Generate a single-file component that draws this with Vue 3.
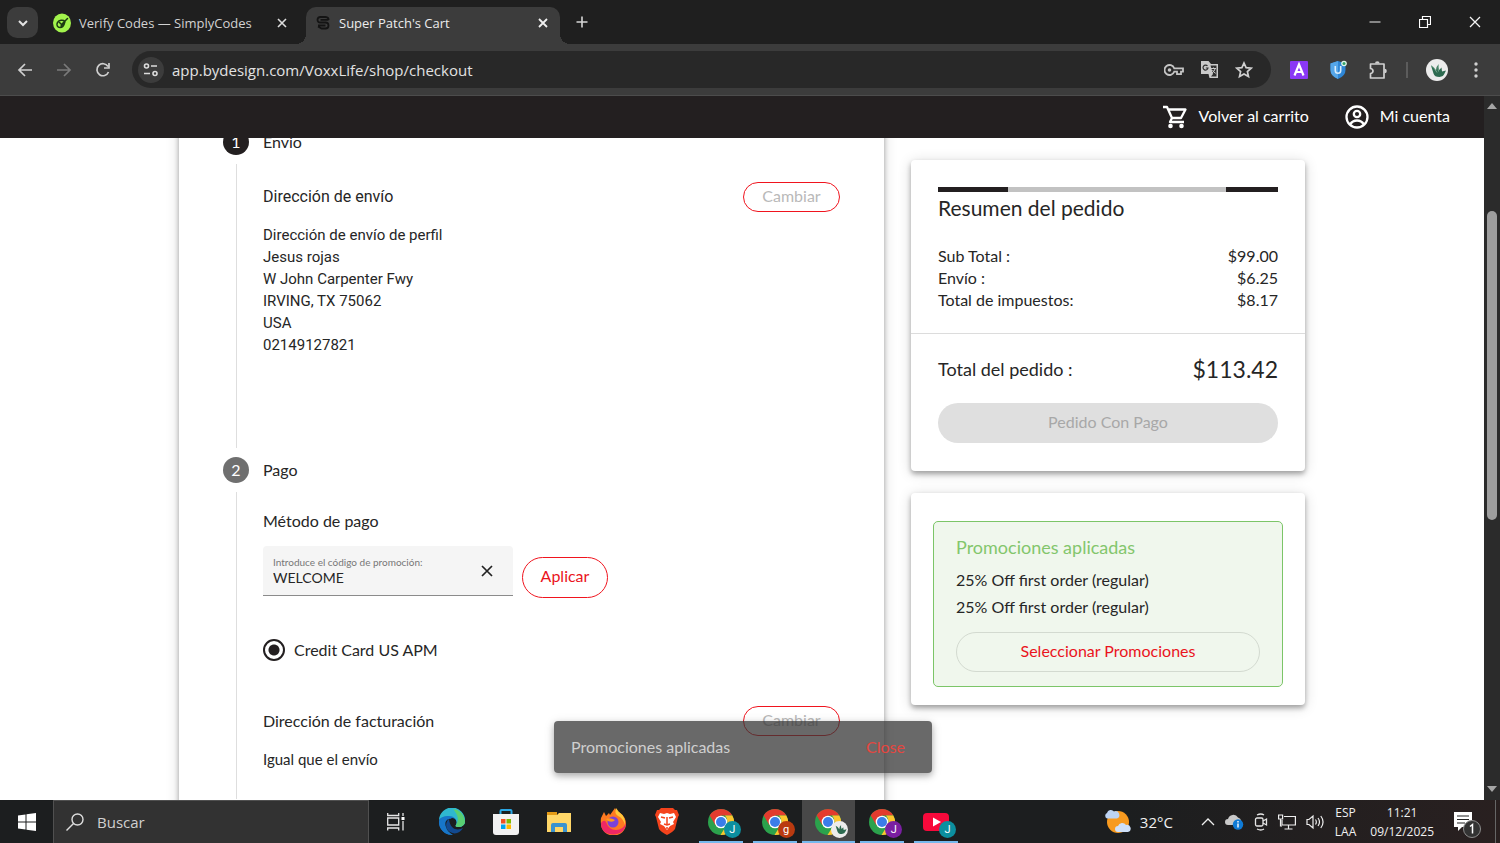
<script setup>
import { ref } from 'vue'

const url = ref('app.bydesign.com/VoxxLife/shop/checkout')
const promoCode = ref('WELCOME')
const payment = ref('card')
const search = ref('')

const address = [
  'Dirección de envío de perfil',
  'Jesus rojas',
  'W John Carpenter Fwy',
  'IRVING, TX 75062',
  'USA',
  '02149127821',
]
const charges = [
  { label: 'Sub Total :', value: '$99.00' },
  { label: 'Envío :', value: '$6.25' },
  { label: 'Total de impuestos:', value: '$8.17' },
]
const promotions = ['25% Off first order (regular)', '25% Off first order (regular)']
const chromeApps = [
  { name: 'Chrome J', letter: 'J', tone: 'teal' },
  { name: 'Chrome g', letter: 'g', tone: 'rust' },
  { name: 'Chrome cart', letter: '', tone: 'plant', active: true },
  { name: 'Chrome J 2', letter: 'J', tone: 'purple' },
]
</script>

<template>
  <div class="desktop">
    <header class="tabstrip">
      <button class="tab-menu" aria-label="Buscar pestañas">
        <svg width="12" height="12" viewBox="0 0 12 12"><path d="M2 4l4 4 4-4" fill="none" stroke="#e3e3e3" stroke-width="2" /></svg>
      </button>
      <div class="tab">
        <svg class="fav" width="18" height="20" viewBox="0 0 18 20">
          <ellipse cx="9" cy="10" rx="9" ry="9.5" fill="#a2f34c" />
          <path d="M12 8.500c-2-2-6-1.500-7.500 1s0 5 2.500 5 4-2 4.500-4.500M6.500 9.500l2 2L14.500 5.500M8 13l4-4" fill="none" stroke="#1c3a12" stroke-width="1.500" stroke-linecap="round" />
        </svg>
        <span class="tab-title">Verify Codes — SimplyCodes</span>
        <button class="tab-close" aria-label="Cerrar pestaña">
          <svg width="10" height="10" viewBox="0 0 10 10"><path d="M1 1l8 8M9 1L1 9" stroke="#dedede" stroke-width="1.600" /></svg>
        </button>
      </div>
      <div class="tab active">
        <svg class="fav" width="16" height="16" viewBox="0 0 16 16">
          <path d="M13.500 5V4Q13 2 10 2H5.500Q2.500 2 2.500 4.800T5.500 7.500H10.500Q13.500 7.500 13.500 10.500T10.500 13.500H6.500L3 11.500M5.500 4.800H13.500M3 10.500H10.500" fill="none" stroke="#141414" stroke-width="1.800" stroke-linejoin="round" />
        </svg>
        <span class="tab-title">Super Patch's Cart</span>
        <button class="tab-close" aria-label="Cerrar pestaña">
          <svg width="10" height="10" viewBox="0 0 10 10"><path d="M1 1l8 8M9 1L1 9" stroke="#f0f0f0" stroke-width="1.800" /></svg>
        </button>
      </div>
      <button class="new-tab" aria-label="Nueva pestaña">
        <svg width="12" height="12" viewBox="0 0 12 12"><path d="M6 0.500v11M0.500 6h11" stroke="#d6d6d6" stroke-width="1.600" /></svg>
      </button>
      <div class="window-controls">
        <button aria-label="Minimizar"><svg width="12" height="12" viewBox="0 0 12 12"><path d="M0.500 6h11" stroke="#eee" /></svg></button>
        <button aria-label="Restaurar"><svg width="12" height="12" viewBox="0 0 12 12"><path d="M0.500 3.500h8v8h-8zM3.500 3.500v-3h8v8h-3" fill="none" stroke="#fff" stroke-width="1.200" /></svg></button>
        <button aria-label="Cerrar"><svg width="12" height="12" viewBox="0 0 12 12"><path d="M1 1l10 10M11 1L1 11" stroke="#f4f4f4" stroke-width="1.300" /></svg></button>
      </div>
    </header>

    <div class="toolbar">
      <div class="nav-buttons">
        <button aria-label="Atrás"><svg width="16" height="16" viewBox="0 0 16 16"><path d="M15 8H2M8 2L2 8l6 6" fill="none" stroke="#d0d0d0" stroke-width="1.700" /></svg></button>
        <button aria-label="Adelante"><svg width="16" height="16" viewBox="0 0 16 16"><path d="M1 8h13M8 2l6 6-6 6" fill="none" stroke="#7a7a7a" stroke-width="1.700" /></svg></button>
        <button aria-label="Recargar"><svg width="16" height="16" viewBox="0 0 16 16"><path d="M13.500 10A6 6 0 1 1 13 4.500M14 1v5H9" fill="none" stroke="#d0d0d0" stroke-width="1.700" /></svg></button>
      </div>
      <div class="omnibox">
        <button class="site-info" aria-label="Información del sitio">
          <svg width="16" height="16" viewBox="0 0 16 16" fill="none" stroke="#dcdcdc" stroke-width="1.600"><circle cx="3.500" cy="4" r="2" /><path d="M8 4h6M1 11.500h6" /><circle cx="12" cy="11.500" r="2" /></svg>
        </button>
        <input v-model="url" class="url" aria-label="Dirección" spellcheck="false" />
        <button aria-label="Contraseñas">
          <svg width="20" height="12" viewBox="0 0 20 12" fill="none" stroke="#c4c4c4" stroke-width="1.800"><path d="M10.200 4.300A5 5 0 1 0 10.200 7.700H13v2.500h4V7.700h2V4.300z" /><circle cx="5.500" cy="6" r="1.800" fill="#c4c4c4" stroke="none" /></svg>
        </button>
        <button aria-label="Traducir">
          <svg width="19" height="19" viewBox="0 0 19 19"><path d="M1 1h7.500l2.500 3h7v14H9.500L8.500 14H1z" fill="#c9c9c9" /><path d="M10.500 5.500h6v11h-5.500l2-2.500z" fill="#303030" /><path d="M7.500 6A2.500 2.500 0 1 0 8 8H5.800" fill="none" stroke="#303030" stroke-width="1.200" /><path d="M11 8.500h5M13.500 7.500v1M15.200 8.500q-.7 3-3.200 4.500M12.500 10q1 2.200 3.200 3.300" fill="none" stroke="#c9c9c9" stroke-width="1" /></svg>
        </button>
        <button aria-label="Favorito">
          <svg width="18" height="18" viewBox="0 0 18 18"><path d="M9 2l2.100 4.700 5.100.5-3.800 3.400 1.100 5L9 13l-4.500 2.600 1.100-5L1.800 7.200l5.100-.5z" fill="none" stroke="#cfcfcf" stroke-width="1.700" /></svg>
        </button>
      </div>
      <div class="extensions">
        <button aria-label="Extensión A"><svg width="18" height="18" viewBox="0 0 18 18"><rect width="18" height="18" rx="1" fill="#8a38f5" /><path d="M4.500 14.500L9 3.500l4.500 11M6 11h6" fill="none" stroke="#fff" stroke-width="2.200" /></svg></button>
        <button aria-label="Extensión U"><svg width="18" height="20" viewBox="0 0 18 20"><path d="M9 1l7.500 2.500V10q0 6-7.500 9Q1.500 16 1.500 10V3.500z" fill="#2e86d6" /><path d="M9 1L1.500 3.500V10q0 6 7.500 9z" fill="#55a6e8" /><path d="M6.300 6v4.500a2.700 2.700 0 0 0 5.400 0V6" fill="none" stroke="#d8ecfb" stroke-width="1.600" /><circle cx="15" cy="3.500" r="2.800" fill="#dff5ea" /><circle cx="15" cy="3.500" r="1.500" fill="#35a36b" /></svg></button>
        <button aria-label="Extensiones"><svg width="20" height="20" viewBox="0 0 20 20"><path d="M2.500 4H16v14H2.500v-4.500a2.500 2.500 0 0 0 0-5z" fill="none" stroke="#d0d0d0" stroke-width="1.700" stroke-linejoin="round" /><path d="M7 3.500a2.300 2.300 0 0 1 4.600 0zM16.500 8.700a2.300 2.300 0 0 1 0 4.600z" fill="#d0d0d0" /></svg></button>
        <span class="divider"></span>
        <button aria-label="Perfil"><svg width="22" height="22" viewBox="0 0 22 22"><circle cx="11" cy="11" r="11" fill="#ececec" /><path d="M5 6.500q3 1 5 5 0-4 2.500-6-.5 3 .7 5.500l2.300-2.500.5 4 4-1-1.500 3q-1 3-5 3.500-5 0-6-3.500z" fill="#2d6a50" /><path d="M5 6.500q3.500 2 6 7M12.500 5.500q-1 3 0 7" fill="none" stroke="#85b59b" stroke-width=".8" /></svg></button>
        <button class="menu" aria-label="Menú"><svg width="4" height="16" viewBox="0 0 4 16" fill="#d0d0d0"><circle cx="2" cy="2" r="1.700" /><circle cx="2" cy="8" r="1.700" /><circle cx="2" cy="14" r="1.700" /></svg></button>
      </div>
    </div>

    <div class="viewport">
      <div class="site">
        <nav class="site-header">
          <a href="#carrito">
            <svg width="26" height="24" viewBox="0 0 26 24"><path d="M1 2h4l5 11h9l4.500-8.500H7M10 13l-2 4h14" fill="none" stroke="#fff" stroke-width="2.300" stroke-linejoin="round" /><circle cx="8.500" cy="21" r="2.300" fill="#fff" /><circle cx="19.500" cy="21" r="2.300" fill="#fff" /></svg>
            <span>Volver al carrito</span>
          </a>
          <a href="#cuenta">
            <svg width="24" height="24" viewBox="0 0 24 24" fill="none" stroke="#fff" stroke-width="2.300"><circle cx="12" cy="12" r="10.500" /><circle cx="12" cy="9" r="3.200" /><path d="M5 19.500q2.500-4 7-4t7 4" /></svg>
            <span>Mi cuenta</span>
          </a>
        </nav>

        <main class="page">
          <section class="steps card">
            <div class="step-head"><span class="num dark">1</span><span class="step-name">Envío</span></div>
            <div class="step-body shipping">
              <div class="title-row">
                <h2 class="roboto">Dirección de envío</h2>
                <button class="change" disabled>Cambiar</button>
              </div>
              <address><span v-for="line in address" :key="line">{{ line }}</span></address>
            </div>
            <div class="step-head"><span class="num">2</span><span class="step-name">Pago</span></div>
            <div class="step-body">
              <h2>Método de pago</h2>
              <div class="promo-row">
                <div class="field">
                  <div class="field-text">
                    <label for="promo">Introduce el código de promoción:</label>
                    <input id="promo" v-model="promoCode" />
                  </div>
                  <button class="clear" aria-label="Borrar"><svg width="12" height="12" viewBox="0 0 12 12"><path d="M1 1l10 10M11 1L1 11" stroke="#222" stroke-width="1.700" /></svg></button>
                </div>
                <button class="apply">Aplicar</button>
              </div>
              <label class="radio"><input v-model="payment" type="radio" name="pay" value="card" />Credit Card US APM</label>
              <div class="title-row">
                <h2>Dirección de facturación</h2>
                <button class="change" disabled>Cambiar</button>
              </div>
              <p class="same">Igual que el envío</p>
            </div>
          </section>

          <aside class="side">
            <section class="summary card">
              <div class="progress"><i class="a"></i><i class="b"></i></div>
              <h2>Resumen del pedido</h2>
              <dl>
                <div v-for="c in charges" :key="c.label"><dt>{{ c.label }}</dt><dd>{{ c.value }}</dd></div>
              </dl>
              <div class="total">
                <div class="total-row"><span>Total del pedido :</span><strong>$113.42</strong></div>
                <button class="pay" disabled>Pedido Con Pago</button>
              </div>
            </section>
            <section class="promos card">
              <div class="promo-box">
                <h3>Promociones aplicadas</h3>
                <p v-for="(p, i) in promotions" :key="i">{{ p }}</p>
                <button>Seleccionar Promociones</button>
              </div>
            </section>
          </aside>
        </main>

        <div class="snackbar" role="status">
          <span>Promociones aplicadas</span>
          <button>Close</button>
        </div>
      </div>

      <div class="scrollbar">
        <svg width="10" height="6" viewBox="0 0 10 6"><path d="M0 6l5-6 5 6z" fill="#a5a5a5" /></svg>
        <div class="track"><div class="thumb"></div></div>
        <svg width="10" height="6" viewBox="0 0 10 6"><path d="M0 0h10L5 6z" fill="#a5a5a5" /></svg>
      </div>
    </div>

    <footer class="taskbar">
      <button class="start" aria-label="Inicio"><svg width="18" height="18" viewBox="0 0 18 18" fill="#fff"><path d="M0 2.500L7.500 1.500v7H0zM8.500 1.300L18 0v8.500H8.500zM0 9.500h7.500v7L0 15.500zM8.500 9.500H18V18l-9.500-1.300z" /></svg></button>
      <label class="search">
        <svg width="18" height="18" viewBox="0 0 18 18"><circle cx="11.500" cy="6.500" r="5.500" fill="none" stroke="#ddd" stroke-width="1.400" /><path d="M7.500 10.500L0.500 17.500" stroke="#ddd" stroke-width="1.400" /></svg>
        <input v-model="search" placeholder="Buscar" aria-label="Buscar" />
      </label>
      <button class="start" aria-label="Vista de tareas"><svg width="18" height="18" viewBox="0 0 18 18" fill="none" stroke="#e6e6e6" stroke-width="1.300"><path d="M0.700 0v2.500h11V0M0.700 5h11v7h-11zM0.700 17.500V15h11v2.500M16 0v3M16 8v9.500" /><rect x="14.500" y="4" width="3" height="3" fill="#fff" stroke="none" /></svg></button>

      <nav class="apps">
        <button aria-label="Edge">
          <svg width="28" height="28" viewBox="0 0 28 28"><path d="M1 14a13 13 0 0 1 26-1c0 4-3 6-7 6-2 0-3-1-2-2 2-3 0-7-4-7-6 0-10 4-8 10 1 4 4 6 7 7A13 13 0 0 1 1 14z" fill="#1776c9" /><path d="M1 12A13 13 0 0 1 27 13c0 4-3 6-7 6-2 0-3-1-2-2 2-4-1-9-7-9-5 0-8 1-10 4z" fill="#2fb8cf" /><path d="M15 1.100A13 13 0 0 1 27 13c0 4-3 6-7 6-2 0-3-1-2-2 4-6 1-11-3-15.900z" fill="#59cf72" /><path d="M11 11c-4 3-4 10 1 13 5 3 10 1 13-4-5 3-13 2-14-9z" fill="#124a91" /><path d="M1 14c1-5 9-7 13-3-5-1-8 3-6 8 1 4 4 6 7 8A13 13 0 0 1 1 14z" fill="#1776c9" /></svg>
        </button>
        <button aria-label="Microsoft Store">
          <svg width="26" height="28" viewBox="0 0 26 28"><path d="M7.500 6V3q0-1 1-1h9q1 0 1 1v3" fill="none" stroke="#2aa7e5" stroke-width="2" /><path d="M0 6h26v18q0 3-3 3H3q-3 0-3-3z" fill="#f2f2f2" /><path d="M8 11h4.500v4.500H8z" fill="#f25022" /><path d="M13.500 11H18v4.500h-4.500z" fill="#7fba00" /><path d="M8 16.500h4.500V21H8z" fill="#00a4ef" /><path d="M13.500 16.500H18V21h-4.500z" fill="#ffb900" /></svg>
        </button>
        <button aria-label="Explorador">
          <svg width="24" height="20" viewBox="0 0 24 20"><path d="M0 0h10v4H0z" fill="#e49b16" /><path d="M0 3h10l2-2h12v19H0z" fill="#ffd768" /><path d="M4 20v-7q0-2 2-2h12q2 0 2 2v7h-4v-5H8v5z" fill="#3a93cf" /></svg>
        </button>
        <button aria-label="Firefox">
          <svg width="26" height="27" viewBox="0 0 26 27"><path d="M1 10l3-6 2 4 3-3 1 2 5-7 2 5q1-1 2-1 7 5 7 12a12.500 11.500 0 0 1-25 0q-.5-3 0-6z" fill="#ff7a21" /><path d="M1 15q0 11 12 11.500Q25 26 26 15q-3 7-10 7T6 14q-2-3-5 1z" fill="#ef2864" /><path d="M16 0l3 4q7 5 6 13-2-7-7-9-4-3-2-8z" fill="#ffc83a" /><circle cx="13" cy="14" r="5.500" fill="#7b42d8" /><path d="M6 11q4-2 9 1-2 3-7 1z" fill="#ff9a1c" /></svg>
        </button>
        <button aria-label="Brave">
          <svg width="24" height="27" viewBox="0 0 24 27"><path d="M6 0h12l2 2h2l2 5-1 2-3 12q-2 3-8 6-6-3-8-6L1 9 0 7l2-5h2z" fill="#f4431c" /><path d="M5 5l4 1 3-1 3 1 4-1 2 4-3 5 1 2-4 2-3 4-3-4-4-2 1-2-3-5z" fill="#fff" /><path d="M6 9l4 1M18 9l-4 1M12 9v7M9 16l3 1 3-1M12 19v2" fill="none" stroke="#f4431c" stroke-width="1.500" /></svg>
        </button>
        <button v-for="app in chromeApps" :key="app.name" class="running" :class="{ current: app.active }" :aria-label="app.name">
          <span class="app-icon">
            <svg width="28" height="28" viewBox="0 0 28 28"><circle cx="14" cy="14" r="13" fill="#2ba24c" /><path d="M2.700 7.500A13 13 0 0 1 25.300 7.500H14L8.400 17.200z" fill="#e33b2e" /><path d="M25.300 7.500A13 13 0 0 1 13.500 27L19.600 17.200Q22 12 18 7.500z" fill="#fcc62d" /><circle cx="14" cy="14" r="6.300" fill="#fff" /><circle cx="14" cy="14" r="5" fill="#3b7de9" /></svg>
            <span class="badge" :class="app.tone">
              <template v-if="app.letter">{{ app.letter }}</template>
              <svg v-else width="16" height="16" viewBox="0 0 22 22"><path d="M5 6.500q3 1 5 5 0-4 2.500-6-.5 3 .7 5.500l2.300-2.500.5 4 4-1-1.500 3q-1 3-5 3.500-5 0-6-3.500z" fill="#2d6a50" /></svg>
            </span>
          </span>
        </button>
        <button class="running" aria-label="YouTube">
          <span class="app-icon">
            <svg width="28" height="28" viewBox="0 0 28 28"><rect x="1" y="5" width="26" height="18" rx="4" fill="#f7093b" /><path d="M11 9.500l8 4.500-8 4.500z" fill="#fff" /></svg>
            <span class="badge teal">J</span>
          </span>
        </button>
      </nav>

      <div class="tray">
        <button class="weather">
          <svg width="27" height="26" viewBox="0 0 27 26"><circle cx="14" cy="13" r="11" fill="#f79a1f" /><path d="M3 9.500a3 3 0 0 1 0-5.500 4 4 0 0 1 7-1.500A3.500 3.500 0 0 1 13 9.500z" fill="#bcd3f3" /><path d="M14 23a3 3 0 0 1 0-6 4.500 4.500 0 0 1 8-1 3.500 3.500 0 0 1 2 7z" fill="#cfe0f8" /></svg>
          32°C
        </button>
        <button aria-label="Iconos ocultos"><svg width="14" height="9" viewBox="0 0 14 9"><path d="M1 8l6-6 6 6" fill="none" stroke="#eee" stroke-width="1.300" /></svg></button>
        <button aria-label="OneDrive"><svg width="19" height="16" viewBox="0 0 19 16"><path d="M3 11a3 3 0 0 1 0-6 5.500 5.500 0 0 1 10-1.500A4 4 0 0 1 14 11z" fill="#c9c9c9" /><circle cx="13" cy="10.500" r="5.200" fill="#0f7bd7" /><path d="M13 9.500v4M13 7v1.400" stroke="#fff" stroke-width="1.400" /></svg></button>
        <button aria-label="Cámara"><svg width="14" height="18" viewBox="0 0 14 18" fill="none" stroke="#e6e6e6" stroke-width="1.300"><path d="M3 2q4-2 7 0M3 16q4 2 7 0" /><rect x="1.500" y="5" width="7.500" height="8" rx="1.500" /><path d="M9 8l3.500-2v6L9 10" /></svg></button>
        <button aria-label="Red"><svg width="18" height="16" viewBox="0 0 18 16" fill="none" stroke="#eee" stroke-width="1.200"><path d="M6 2.500h11.400v8.500H4V6M10.500 11v4M6.500 15h8" /><path d="M0.600 1h4v4h-4zM2.500 5v7H4" /></svg></button>
        <button aria-label="Volumen"><svg width="19" height="16" viewBox="0 0 19 16" fill="none" stroke="#eee" stroke-width="1.200"><path d="M1 5.500h2L7 2v12l-4-3.500H1zM9.500 5.500q1.700 2.500 0 5M12 4q3 4 0 8M14.800 2q4.500 6 0 12" /></svg></button>
        <button class="two lang"><span>ESP</span><span>LAA</span></button>
        <button class="two clock"><span>11:21</span><span>09/12/2025</span></button>
        <button class="notices" aria-label="Notificaciones"><svg width="28" height="27" viewBox="0 0 28 27"><path d="M0 1h18v15H8l-4 4v-4H0z" fill="#fff" /><path d="M3 5h12M3 8.500h12M3 12h8" stroke="#222" stroke-width="1.200" /><circle cx="18" cy="18" r="8.500" fill="#333" stroke="#8d8d8d" /><path d="M16 15.500l2.500-2v9" fill="none" stroke="#fff" stroke-width="1.500" /></svg></button>
        <span class="show-desktop"></span>
      </div>
    </footer>
  </div>
</template>

<style>
body { overflow: hidden; }
</style>

<style scoped>
.desktop {
  display: flex;
  flex-direction: column;
  height: 100vh;
  font-family: Lato, "Open Sans", sans-serif;
  font-size: 16px;
  color: #262626;
  background: #fff;
}
.desktop * { box-sizing: border-box; }
button, input { font: inherit; color: inherit; border: 0; padding: 0; background: none; outline: 0; }
button { display: flex; align-items: center; justify-content: center; }
h2, h3, p, dl, dd { margin: 0; font-size: 16px; font-weight: 400; }
svg { flex: none; display: block; }

.tabstrip { display: flex; height: 44px; flex: none; padding-left: 7px; background: #1f1f1f; font-family: "Open Sans", sans-serif; font-size: 13px; color: #d2d2d2; }
.tab-menu { width: 31px; height: 31px; margin-top: 7px; border-radius: 10px; background: #3c3c3c; }
.tab { display: flex; align-items: center; width: 254px; height: 31px; margin-top: 7px; padding: 0 12px 0 8px; }
.tab:not(.active) { margin-left: 7px; }
.fav { margin-right: 8px; }
.tab-title { flex: 1; white-space: nowrap; }
.tab-close { width: 10px; }
.tab.active { position: relative; height: 37px; margin-left: 7px; padding: 0 12px 6px 9px; border-radius: 10px 10px 0 0; background: #3c3c3c; color: #ececec; }
.tab.active::before, .tab.active::after { content: ""; position: absolute; bottom: 0; width: 10px; height: 10px; }
.tab.active::before { right: 100%; background: radial-gradient(circle at 0 0, #1f1f1f 10px, #3c3c3c 10px); }
.tab.active::after { left: 100%; background: radial-gradient(circle at 100% 0, #1f1f1f 10px, #3c3c3c 10px); }
.new-tab { width: 44px; }
.window-controls { display: flex; margin-left: auto; }
.window-controls button { width: 50px; }

.toolbar { display: flex; align-items: center; height: 52px; flex: none; background: #3c3c3c; border-bottom: 1px solid #4c4c4c; }
.nav-buttons { display: flex; padding-left: 5px; }
.nav-buttons button { width: 39px; height: 32px; }
.omnibox { display: flex; align-items: center; flex: 1; height: 37px; margin-left: 10px; padding: 0 18px 0 6px; gap: 16px; border-radius: 19px; background: #282828; }
.site-info { width: 26px; height: 26px; border-radius: 50%; background: #3c3c3c; }
.url { flex: 1; min-width: 0; margin-left: -8px; font-family: "Open Sans", sans-serif; font-size: 15px; color: #e2e2e2; }
.extensions { display: flex; align-items: center; padding: 0 22px 0 19px; gap: 21px; }
.divider { width: 2px; height: 16px; margin: 0 -3px; background: #5c5c5c; }
.menu { margin-left: 5px; }

.viewport { display: flex; flex: 1; min-height: 0; }
.site { position: relative; flex: 1; min-width: 0; overflow: hidden; }
.site-header { position: relative; z-index: 1; display: flex; justify-content: flex-end; align-items: center; gap: 36px; height: 42px; padding-right: 34px; background: #231f20; color: #fff; }
.site-header a { display: flex; align-items: center; gap: 11px; color: #fff; text-decoration: none; }
.site-header span { padding-bottom: 4px; }
.page { display: grid; grid-template-columns: 705fr 394fr; gap: 27px; max-width: 1126px; margin: -18px auto 0; align-items: start; }
.card { background: #fff; border-radius: 4px; box-shadow: 0 3px 5px rgba(0, 0, 0, .3), 0 2px 14px rgba(0, 0, 0, .16); }
.steps { padding: 0 44px; min-height: 700px; }
.step-head { display: flex; align-items: center; height: 44px; gap: 14px; }
.step-name { padding-bottom: 2px; }
.num { width: 26px; height: 26px; border-radius: 50%; background: #6f6f6f; color: #fff; line-height: 26px; text-align: center; }
.num.dark { background: #231f20; }
.step-body { margin-left: 13px; padding: 18px 0 29px 26px; border-left: 1px solid #dedede; line-height: 22px; }
.shipping { padding-bottom: 92px; }
.title-row { display: flex; align-items: center; justify-content: space-between; height: 30px; margin-bottom: 12px; }
.change { width: 97px; height: 30px; padding-bottom: 3px; border: 1px solid #f0141e; border-radius: 15px; color: #b9b9b9; }
.roboto, address { font-family: Roboto, sans-serif; font-style: normal; }
address { font-size: 15px; }
address span { display: block; }
.promo-row { display: flex; gap: 9px; margin-top: 14px; }
.field { display: flex; align-items: center; width: 250px; height: 50px; padding: 0 20px 0 10px; border-bottom: 1px solid #8b8b8b; border-radius: 4px 4px 0 0; background: #f5f5f5; }
.field-text { flex: 1; min-width: 0; }
.field label { display: block; font-size: 10px; line-height: 14px; color: #777; }
.field input { display: block; width: 100%; height: 18px; font-size: 14px; line-height: 18px; }
.apply { width: 86px; height: 41px; margin-top: 11px; padding-bottom: 3px; border: 1px solid #f0141e; border-radius: 21px; color: #ea141c; }
.radio { display: flex; align-items: center; gap: 9px; margin: 41px 0 45px; }
.radio input { appearance: none; width: 22px; height: 22px; margin: 0; border: 2px solid #231f20; border-radius: 50%; background: radial-gradient(circle, #231f20 5px, #fff 6px); }
.same { font-size: 15px; }

.side { display: grid; gap: 22px; padding-top: 40px; }
.summary { padding: 27px 0 28px; }
.progress { display: flex; justify-content: space-between; height: 5px; margin: 0 27px; background: #c2c2c2; }
.progress i { background: #231f20; }
.progress .a { width: 70px; }
.progress .b { width: 52px; }
.summary h2 { margin: 2px 27px 23px; font-size: 21px; line-height: 28px; }
.summary dl { margin: 0 27px 22px; line-height: 22px; }
.summary dl div, .total-row { display: flex; justify-content: space-between; }
.total { padding: 20px 27px 0; border-top: 1px solid #dcdcdc; }
.total-row { align-items: center; height: 30px; margin-bottom: 19px; font-size: 18px; }
.total-row strong { font-size: 23px; font-weight: 400; }
.pay { width: 100%; height: 40px; padding-bottom: 3px; border-radius: 20px; background: #dfdfdf; color: #a8a8a8; }
.promos { padding: 28px 22px 18px; }
.promo-box { padding: 13px 22px 14px; border: 1px solid #7cc568; border-radius: 5px; background: #f0f7ed; }
.promo-box h3 { margin-bottom: 7px; font-size: 18px; line-height: 24px; color: #83c66c; }
.promo-box p { line-height: 27px; }
.promo-box button { width: 100%; height: 40px; margin-top: 12px; padding-bottom: 3px; border: 1px solid #d3dad0; border-radius: 20px; color: #ea141c; }

.snackbar { position: absolute; left: 50%; bottom: 27px; display: flex; align-items: center; justify-content: space-between; width: 378px; height: 52px; margin-left: -188px; padding: 0 27px 2px 17px; border-radius: 4px; background: rgba(52, 52, 52, .74); box-shadow: 0 3px 6px rgba(0, 0, 0, .25), 0 2px 12px rgba(0, 0, 0, .12); color: #cfcfcf; }
.snackbar button { color: #e5463f; }

.scrollbar { display: flex; flex-direction: column; align-items: center; width: 16px; padding: 7px 0 8px; background: #2b2b2b; }
.track { flex: 1; width: 10px; padding-top: 102px; }
.thumb { height: 309px; border-radius: 5px; background: #9e9e9e; }

.taskbar { display: flex; height: 43px; flex: none; background: linear-gradient(90deg, #1c1e1f 75%, #292020); color: #f0f0f0; font-family: "Open Sans", sans-serif; font-size: 14px; }
.start { width: 53px; }
.search { display: flex; align-items: center; width: 316px; padding-left: 12px; gap: 13px; border: 1px solid #505050; border-bottom: 0; background: #323232; }
.search input { flex: 1; min-width: 0; font-size: 15px; }
.search input::placeholder { color: #d0d0d0; opacity: 1; }
.apps { display: grid; grid-template-columns: repeat(10, 1fr); width: 538px; margin-left: 3px; }
.apps button { border-bottom: 3px solid transparent; padding-top: 3px; }
.apps .running { background: linear-gradient(#76b9ed, #76b9ed) bottom / 44px 2px no-repeat; background-origin: border-box; background-clip: border-box; }
.apps .current { background: linear-gradient(#76b9ed, #76b9ed) bottom / 54px 2px no-repeat border-box #484848; }
.app-icon { position: relative; }
.badge { position: absolute; right: -6px; bottom: -2px; display: flex; align-items: center; justify-content: center; width: 17px; height: 17px; border-radius: 50%; font: 11px/17px Roboto, sans-serif; color: #fff; }
.teal { background: #0c8f9f; }
.rust { background: #b93a10; }
.purple { background: #7a1fa2; }
.plant { background: #ececec; }
.tray { display: flex; align-items: center; margin-left: auto; gap: 10px; padding-right: 4px; }
.weather { gap: 9px; margin-right: 18px; font-size: 15px; }
.two { flex-direction: column; font-size: 12px; line-height: 19px; }
.clock { margin: 0 10px 0 4px; }
.notices { padding-top: 6px; }
.show-desktop { width: 1px; height: 43px; margin-left: 3px; background: #666; }
</style>
